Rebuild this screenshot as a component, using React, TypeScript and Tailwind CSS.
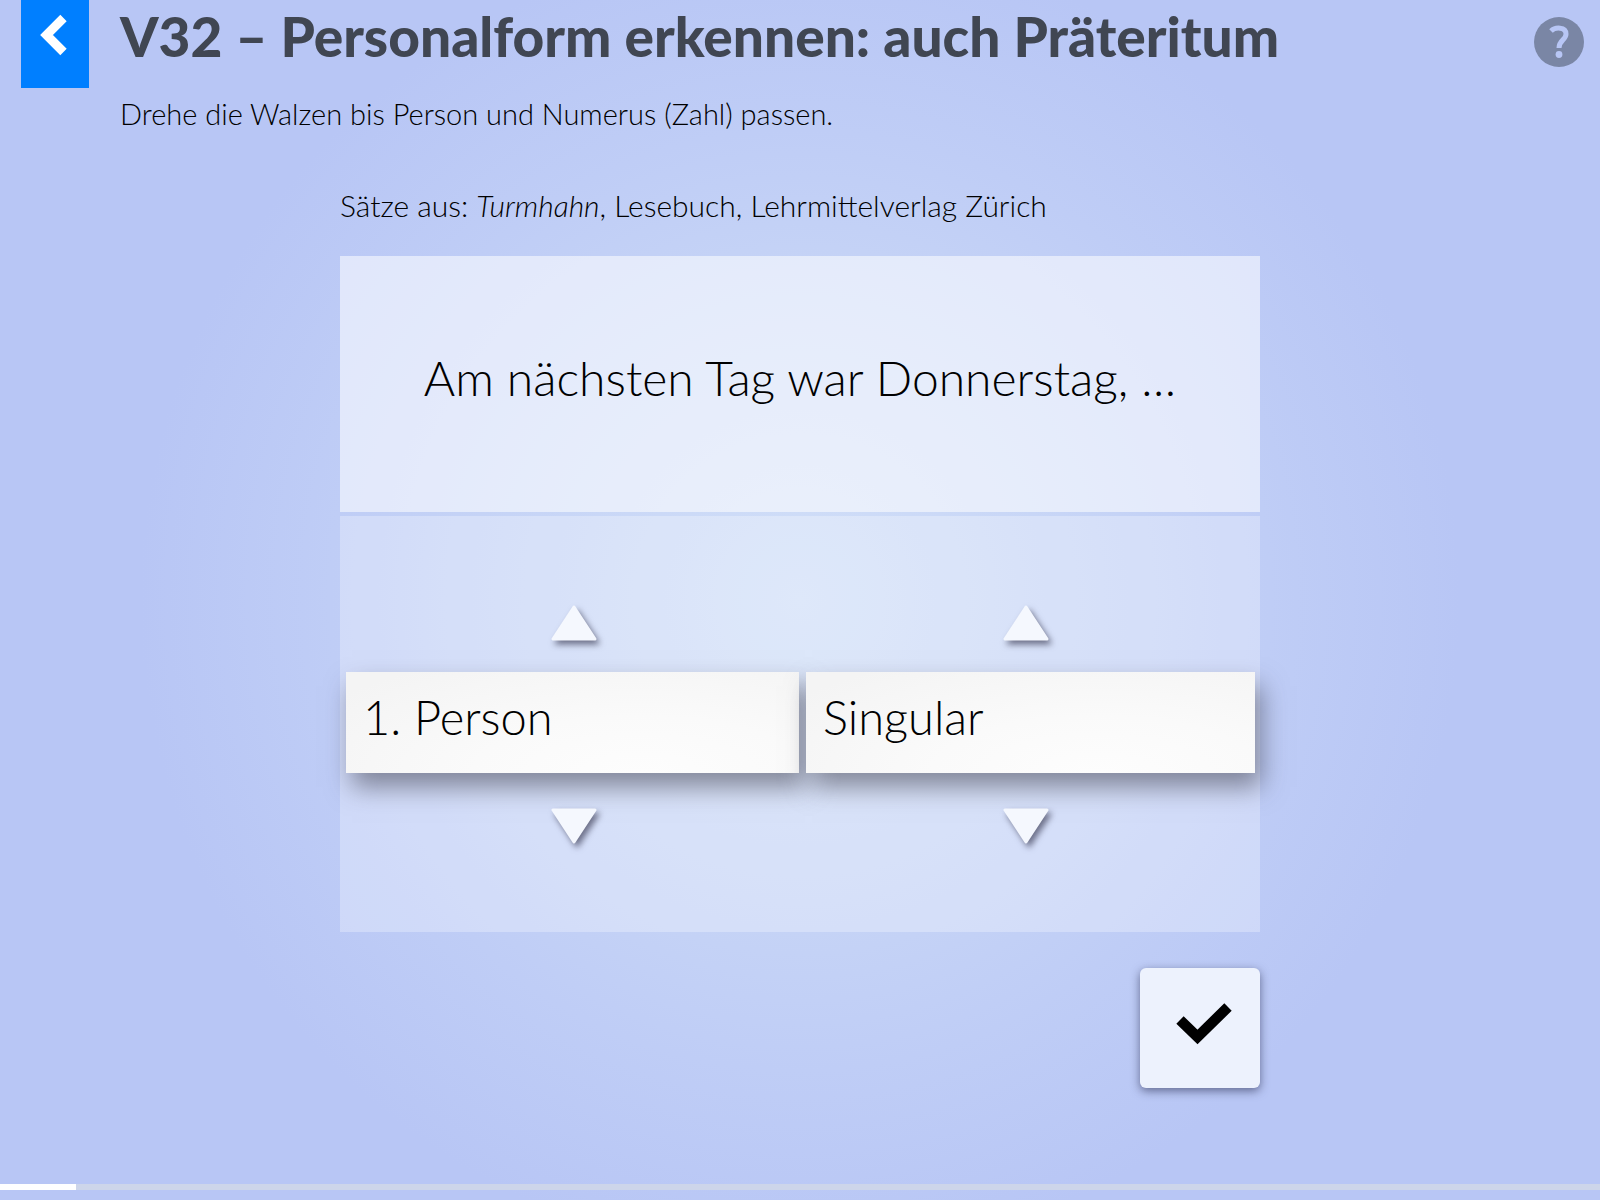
import { useState } from 'react'

const persons = ['1. Person', '2. Person', '3. Person']
const numbers = ['Singular', 'Plural']

function Arrow({ label, down, onClick }: { label: string; down?: boolean; onClick: () => void }) {
  return (
    <button type="button" aria-label={label} onClick={onClick} className="cursor-pointer">
      <svg
        width="46"
        height="36"
        viewBox="0 0 46 36"
        className="overflow-visible drop-shadow-[3px_4px_3px_rgba(50,50,75,0.65)]"
      >
        <path
          d={down ? 'M2 1 H44 L23 33 Z' : 'M2 34 H44 L23 2 Z'}
          fill="#f5f8fe"
          stroke="#f5f8fe"
          strokeWidth="3"
          strokeLinejoin="round"
        />
      </svg>
    </button>
  )
}

function Card({ text }: { text: string }) {
  return (
    <div className="h-[101px] bg-[radial-gradient(ellipse_at_65%_100%,#fdfdfd_0%,#fafafa_40%,#f4f4f4_90%)] px-[17px] pt-[15px] text-[47px] leading-[60px] shadow-[6px_14px_24px_rgba(60,60,75,0.55)]">
      {text}
    </div>
  )
}

export default function App() {
  const [person, setPerson] = useState(0)
  const [number, setNumber] = useState(0)

  const turnPerson = (step: number) => setPerson((person + step + persons.length) % persons.length)
  const turnNumber = (step: number) => setNumber((number + step + numbers.length) % numbers.length)

  return (
    <div className="flex min-h-screen flex-col bg-[#b8c6f5] bg-[radial-gradient(circle_at_center,#d1dff8_0px,#c5d3f6_330px,#bfcdf6_470px,#b8c6f5_660px)] font-['Lato','Liberation_Sans',sans-serif] font-light text-black">
      <header className="flex items-start pr-4 pl-[21px]">
        <a href="#" aria-label="Zurück" className="flex h-22 w-17 justify-center bg-[#007fff] pt-3.5 pr-0.5">
          <svg width="28" height="42" viewBox="0 0 28 42" fill="none">
            <path d="M23.5 4 L6.500 21 L23.500 38" stroke="#fff" strokeWidth="9" />
          </svg>
        </a>
        <div className="ml-[31px] flex-1">
          <h1 className="pt-0.5 text-[55px] leading-[68px] font-black text-[#404652]">
            V32 – Personalform erkennen: auch Präteritum
          </h1>
          <p className="mt-6 text-[29px] leading-10">Drehe die Walzen bis Person und Numerus (Zahl) passen.</p>
        </div>
        <button
          type="button"
          aria-label="Hilfe"
          className="mt-[17px] flex size-[50px] items-center justify-center rounded-full bg-[#7a86a5]"
        >
          <svg width="24" height="36" viewBox="0 0 24 36" fill="none">
            <path d="M4 7 C8 3 19 2.500 19 10 C19 16 12 16 12 24" stroke="#b8c6f5" strokeWidth="5" />
            <circle cx="12" cy="30.500" r="3.400" fill="#b8c6f5" />
          </svg>
        </button>
      </header>

      <main className="mx-auto mt-[51px] w-full max-w-[920px]">
        <p className="text-[30px] leading-10">
          Sätze aus: <em>Turmhahn</em>, Lesebuch, Lehrmittelverlag Zürich
        </p>

        <div className="mt-[31px] flex h-64 items-center justify-center bg-white/55 pb-3 text-[48px] leading-[60px]">
          Am nächsten Tag war Donnerstag, …
        </div>

        <div className="mt-1 bg-white/28 pt-[89px] pb-[87px]">
          <div className="grid grid-cols-2 justify-items-center px-2">
            <Arrow label="Person zurück" onClick={() => turnPerson(-1)} />
            <Arrow label="Numerus zurück" onClick={() => turnNumber(-1)} />
          </div>
          <div className="mt-[31px] grid grid-cols-[453fr_449fr] gap-[7px] pr-[5px] pl-1.5">
            <Card text={persons[person]} />
            <Card text={numbers[number]} />
          </div>
          <div className="mt-9 grid grid-cols-2 justify-items-center px-2">
            <Arrow label="Person weiter" down onClick={() => turnPerson(1)} />
            <Arrow label="Numerus weiter" down onClick={() => turnNumber(1)} />
          </div>
        </div>

        <div className="mt-9 flex justify-end">
          <button
            type="button"
            aria-label="Prüfen"
            className="flex size-30 items-center justify-center rounded-md bg-[#edf2fd] shadow-[0_3px_10px_rgba(50,55,90,0.65)]"
          >
            <svg width="56" height="42" viewBox="0 0 56 42" fill="none" className="mb-2 ml-2">
              <path d="M4 17 L21.500 34 L52 4" stroke="#000" strokeWidth="10.500" />
            </svg>
          </button>
        </div>
      </main>

      <div className="mt-auto mb-2.5 h-1.5 bg-[#cdd5ea]">
        <div className="h-full w-[76px] bg-white" />
      </div>
    </div>
  )
}
